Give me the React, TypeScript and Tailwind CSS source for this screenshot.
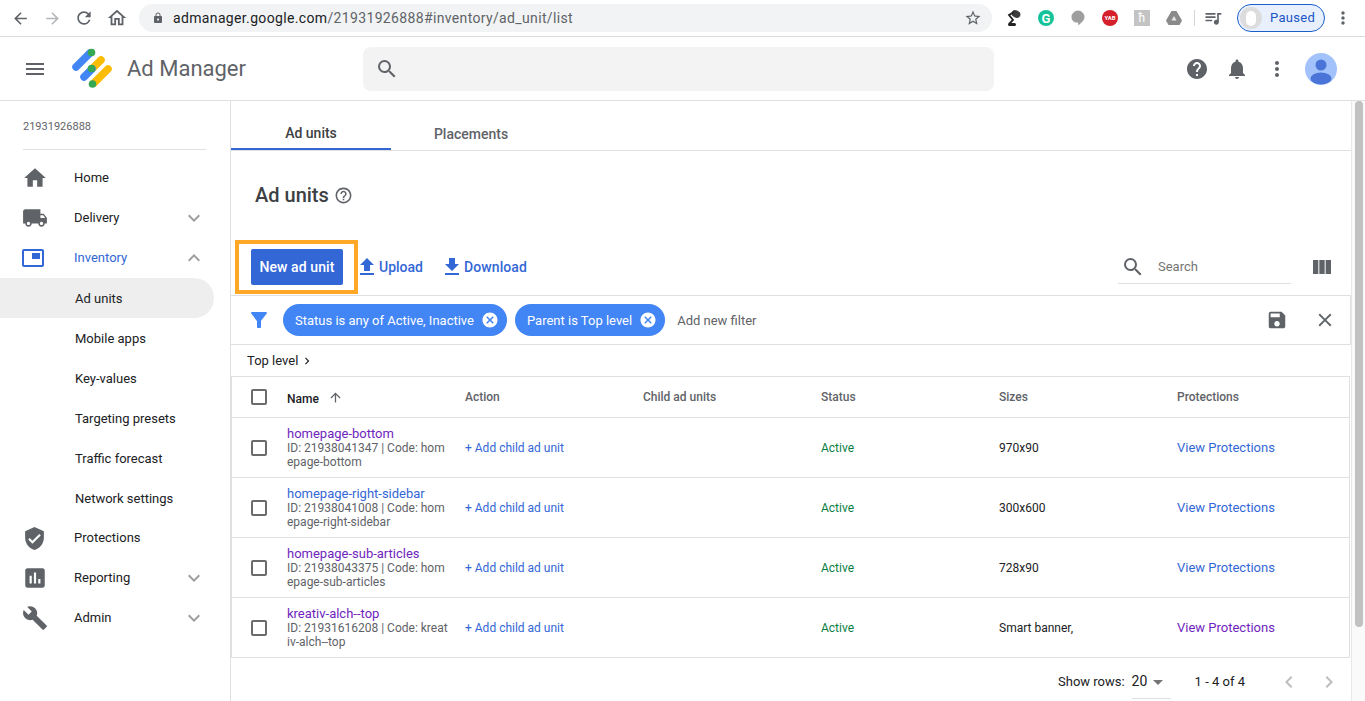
import type { ReactNode } from 'react';
import {
  MdArrowBack, MdArrowForward, MdRefresh, MdOutlineHome, MdLock, MdStarBorder, MdQueueMusic, MdMoreVert,
  MdMenu, MdSearch, MdHelp, MdNotifications, MdHome, MdLocalShipping, MdVerifiedUser, MdAssessment,
  MdBuild, MdExpandMore, MdExpandLess, MdHelpOutline, MdFileUpload, MdFileDownload, MdViewColumn, MdFilterAlt,
  MdCancel, MdSave, MdClose, MdChevronRight, MdChevronLeft, MdArrowUpward, MdArrowDropDown,
} from 'react-icons/md';

const Logo = () => (
  <svg width="42" height="42" viewBox="0 0 42 42" fill="none" strokeLinecap="round" strokeWidth="7.5">
    <path d="M5 19 L19 5" stroke="#4285f4" />
    <path d="M22 20 L30 12" stroke="#fbbc04" />
    <path d="M13 29 L21 21" stroke="#4285f4" />
    <path d="M23 35 L37 21" stroke="#fbbc04" />
    <circle cx="20.5" cy="4.5" r="3.8" fill="#34a853" />
    <circle cx="20.5" cy="20.5" r="3.8" fill="#34a853" />
    <circle cx="21.5" cy="36" r="3.8" fill="#34a853" />
  </svg>
);

const ExtensionIcons = () => (
  <div className="flex items-center">
    <div className="w-[32px] flex justify-center">
      <svg width="16" height="18" viewBox="0 0 16 18">
        <ellipse cx="10" cy="5" rx="4.5" ry="3.6" fill="#3c3c3c" transform="rotate(25 10 5)" />
        <path d="M8 3 L3 6 L7 11 L3 15" stroke="#222" strokeWidth="1.8" fill="none" />
        <rect x="2" y="14" width="8" height="3" rx="1.5" fill="#222" />
      </svg>
    </div>
    <div className="w-[32px] flex justify-center">
      <div className="w-4 h-4 rounded-full bg-[#15c39a] flex items-center justify-center text-white text-[13px] leading-none font-bold">G</div>
    </div>
    <div className="w-[32px] flex justify-center">
      <svg width="14" height="16" viewBox="0 0 14 16">
        <path d="M7 0.5 A6.5 6.5 0 0 1 13.5 7 C13.5 10.5 10 12.5 7.5 15.5 L7 12.5 C3.5 13 0.5 10.500 0.500 7 A6.500 6.500 0 0 1 7 0.500 Z" fill="#9e9e9e" />
      </svg>
    </div>
    <div className="w-[32px] flex justify-center">
      <div className="w-4 h-4 rounded-full bg-[#d3202a] flex items-center justify-center text-white text-[6px] leading-none font-bold">YAB</div>
    </div>
    <div className="w-[32px] flex justify-center">
      <div className="w-4 h-4 bg-[#c4c4c4] flex items-center justify-center text-white text-[12px] leading-none">ћ</div>
    </div>
    <div className="w-[32px] flex justify-center">
      <svg width="16" height="14" viewBox="0 0 16 14">
        <path d="M5.500 0 H10.500 L16 9.500 L13.500 14 H2.500 L0 9.500 Z" fill="#8a8a8a" />
        <path d="M8 5 L10.500 9.500 H5.500 Z" fill="#e8e8e8" />
      </svg>
    </div>
  </div>
);

const BrowserBar = () => (
  <div className="h-[37px] flex items-center border-b border-[#dadce0] bg-white">
    <div className="flex items-center text-[#5f6368] pl-[11px] w-[139px]">
      <MdArrowBack size={19} />
      <MdArrowForward size={19} className="ml-[13px] text-[#b4b6b9]" />
      <MdRefresh size={20} className="ml-[12px]" />
      <MdOutlineHome size={22} className="ml-[12px]" />
    </div>
    <div className="w-[853px] h-[28px] rounded-full bg-[#f1f3f4] flex items-center pl-[13px] pr-[10px]">
      <MdLock size={12} className="text-[#5f6368]" />
      <span className="ml-[9px] text-[14px] tracking-[0.35px] text-[#202124]">
        admanager.google.com<span className="text-[#5f6368]">/21931926888#inventory/ad_unit/list</span>
      </span>
      <MdStarBorder size={18} className="ml-auto text-[#5f6368]" />
    </div>
    <div className="ml-[6px]"><ExtensionIcons /></div>
    <div className="w-px h-[16px] bg-[#d5d5d5] ml-[4px]" />
    <MdQueueMusic size={20} className="ml-[8px] text-[#5f6368]" />
    <div className="ml-[14px] w-[88px] h-[28px] rounded-full border border-[#1a5fc9] bg-[#e8f0fe] flex items-center">
      <div className="w-[22px] h-[22px] ml-[2px] rounded-full bg-[#dcdcdc] flex items-center justify-center">
        <div className="w-[10px] h-[15px] rounded-full bg-white" />
      </div>
      <span className="ml-[8px] text-[13px] text-[#1a56c4] tracking-[0.3px]">Paused</span>
    </div>
    <MdMoreVert size={20} className="ml-[8px] text-[#5f6368]" />
  </div>
);

const Avatar = () => (
  <svg width="32" height="32" viewBox="0 0 32 32" className="ml-[16px]">
    <defs>
      <clipPath id="avatar-clip"><circle cx="16" cy="16" r="16" /></clipPath>
    </defs>
    <g clipPath="url(#avatar-clip)">
      <rect width="32" height="32" fill="#a1c2fa" />
      <circle cx="16" cy="12" r="5.500" fill="#4a74d8" />
      <ellipse cx="16" cy="25.500" rx="10.500" ry="6" fill="#4a74d8" />
    </g>
  </svg>
);

const AppHeader = () => (
  <div className="h-[64px] flex items-center border-b border-[#e0e0e0] bg-white">
    <MdMenu size={24} className="ml-[23px] text-[#5f6368]" />
    <div className="ml-[24px]"><Logo /></div>
    <span className="ml-[14px] text-[22px] text-[#5f6368] leading-none">Ad Manager</span>
    <div className="ml-[117px] w-[631px] h-[44px] rounded-lg bg-[#f3f3f3] flex items-center pl-[12px]">
      <MdSearch size={24} className="text-[#5f6368]" />
    </div>
    <div className="ml-auto flex items-center text-[#5f6368] pr-[28px]">
      <MdHelp size={24} />
      <MdNotifications size={24} className="ml-[16px]" />
      <MdMoreVert size={24} className="ml-[16px]" />
      <Avatar />
    </div>
  </div>
);

type NavItem = { label: string; icon?: ReactNode; chevron?: 'up' | 'down'; active?: boolean; selected?: boolean };

const InventoryIcon = () => (
  <div className="w-[22px] h-[18px] rounded-[2px] border-2 border-[#3367d6] flex justify-end pt-[2px] pr-[2px]">
    <div className="w-[8px] h-[6px] bg-[#3367d6]" />
  </div>
);

const navItems: NavItem[] = [
  { label: 'Home', icon: <MdHome size={26} /> },
  { label: 'Delivery', icon: <MdLocalShipping size={26} />, chevron: 'down' },
  { label: 'Inventory', icon: <InventoryIcon />, chevron: 'up', active: true },
  { label: 'Ad units', selected: true },
  { label: 'Mobile apps' },
  { label: 'Key-values' },
  { label: 'Targeting presets' },
  { label: 'Traffic forecast' },
  { label: 'Network settings' },
  { label: 'Protections', icon: <MdVerifiedUser size={25} /> },
  { label: 'Reporting', icon: <MdAssessment size={26} />, chevron: 'down' },
  { label: 'Admin', icon: <MdBuild size={26} />, chevron: 'down' },
];

const Sidebar = () => (
  <div className="w-[231px] shrink-0 border-r border-[#e0e0e0] bg-white">
    <div className="mx-[23px] mr-[24px] h-[49px] pt-[18px] border-b border-[#e0e0e0] text-[11px] leading-[16px] text-[#5f6368]">21931926888</div>
    <div className="pt-[8px]">
      {navItems.map((item) => (
        <div
          key={item.label}
          className={`h-[40px] w-[214px] flex items-center rounded-r-full text-[13px] ${item.selected ? 'bg-[#eeeeee]' : ''} ${item.active ? 'text-[#3367d6]' : 'text-[#202124]'}`}
        >
          {item.icon ? (
            <>
              <div className="w-[70px] pl-[22px] flex items-center text-[#5f6368]">{item.icon}</div>
              <span className="ml-[4px] -mt-[1px]">{item.label}</span>
            </>
          ) : (
            <span className="ml-[75px] mt-[1px]">{item.label}</span>
          )}
          {item.chevron === 'down' && <MdExpandMore size={24} className="ml-auto mr-[8px] text-[#9e9e9e]" />}
          {item.chevron === 'up' && <MdExpandLess size={24} className="ml-auto mr-[8px] text-[#9e9e9e]" />}
        </div>
      ))}
    </div>
  </div>
);

const Checkbox = () => <div className="w-4 h-4 rounded-[2px] border-2 border-[#6b6b6b]" />;

const FilterChip = ({ label }: { label: string }) => (
  <div className="h-[32px] rounded-full bg-[#4285f4] text-white text-[13px] flex items-center pl-[12px] pr-[8px]">
    <span className="mt-[2px]">{label}</span>
    <MdCancel size={18} className="ml-[7px]" />
  </div>
);

type Row = { name: string; nameVisited: boolean; meta: string; size: string; protectVisited?: boolean };

const rows: Row[] = [
  { name: 'homepage-bottom', nameVisited: true, meta: 'ID: 21938041347 | Code: homepage-bottom', size: '970x90' },
  { name: 'homepage-right-sidebar', nameVisited: false, meta: 'ID: 21938041008 | Code: homepage-right-sidebar', size: '300x600' },
  { name: 'homepage-sub-articles', nameVisited: true, meta: 'ID: 21938043375 | Code: homepage-sub-articles', size: '728x90' },
  { name: 'kreativ-alch--top', nameVisited: true, meta: 'ID: 21931616208 | Code: kreativ-alch--top', size: 'Smart banner,', protectVisited: true },
];

const AdTable = () => (
  <div className="border-y border-l border-r mr-[1px] border-[#e0e0e0]">
    <div className="h-[40px] grid grid-cols-[55px_178px_178px_178px_178px_178px_1fr] items-center text-[12px] font-medium text-[#5f6368]">
      <div className="pl-[19px]"><Checkbox /></div>
      <div className="flex items-center text-[#202124] pt-[4px]">
        Name
        <MdArrowUpward size={15} className="ml-[9px] -mt-[3px] text-[#5f6368]" />
      </div>
      <div>Action</div>
      <div>Child ad units</div>
      <div>Status</div>
      <div>Sizes</div>
      <div>Protections</div>
    </div>
    {rows.map((row) => (
      <div key={row.name} className="h-[60px] border-t border-[#e0e0e0] grid grid-cols-[55px_178px_178px_178px_178px_178px_1fr] items-center text-[12px] text-[#202124]">
        <div className="pl-[19px]"><Checkbox /></div>
        <div className="pr-[15px]">
          <div className={`text-[13px] leading-[14px] ${row.nameVisited ? 'text-[#6f25bd]' : 'text-[#3367d6]'}`}>{row.name}</div>
          <div className="leading-[14px] text-[#5f6368] break-all">{row.meta}</div>
        </div>
        <div className="text-[#3367d6]">+ Add child ad unit</div>
        <div />
        <div className="text-[#0b8043]">Active</div>
        <div>{row.size}</div>
        <div className={`text-[13px] ${row.protectVisited ? 'text-[#6f25bd]' : 'text-[#3367d6]'}`}>View Protections</div>
      </div>
    ))}
  </div>
);

const MainPanel = () => (
  <div className="flex-1 min-w-0 bg-white">
    <div className="h-[50px] flex border-b border-[#e0e0e0] text-[14px] font-medium">
      <div className="w-[160px] h-[49px] flex items-center justify-center border-b-2 border-[#3367d6] text-[#3c4043] pt-[17px]">Ad units</div>
      <div className="w-[160px] flex items-center justify-center text-[#5f6368] pt-[17px]">Placements</div>
    </div>
    <div className="h-[88px] flex items-start pl-[24px] pt-[31px]">
      <span className="text-[20px] font-medium text-[#3c4043] leading-[26px]">Ad units</span>
      <MdHelpOutline size={19} className="ml-[5px] mt-[4px] text-[#5f6368]" />
    </div>
    <div className="h-[57px] flex items-center border-b border-[#e0e0e0]">
      <div className="ml-[4px] w-[123px] h-[54px] border-[4px] border-[#ffa726] flex items-center pl-[12px]">
        <div className="w-[92px] h-[36px] rounded-[2px] bg-[#3367d6] text-white text-[14px] tracking-[0.1px] font-medium flex items-center justify-center">New ad unit</div>
      </div>
      <div className="-ml-[3px] flex items-center text-[#3367d6] text-[14px] font-medium">
        <MdFileUpload size={24} />
        <span>Upload</span>
        <MdFileDownload size={24} className="ml-[17px]" />
        <span className="tracking-[0.1px]">Download</span>
      </div>
      <div className="ml-auto flex items-center w-[173px] h-[33px] border-b border-[#e0e0e0] text-[13px] text-[#757575]">
        <MdSearch size={24} className="ml-[3px] text-[#5f6368]" />
        <span className="ml-[13px]">Search</span>
      </div>
      <MdViewColumn size={24} className="ml-[19px] mr-[17px] text-[#5f6368]" />
    </div>
    <div className="h-[49px] flex items-center border-b border-r border-[#e0e0e0]">
      <MdFilterAlt size={24} className="ml-[16px] text-[#4285f4]" />
      <div className="ml-[12px] flex gap-[8px]">
        <FilterChip label="Status is any of Active, Inactive" />
        <FilterChip label="Parent is Top level" />
      </div>
      <span className="ml-[12px] mt-[2px] text-[13px] text-[#5f6368]">Add new filter</span>
      <MdSave size={22} className="ml-auto text-[#5f6368]" />
      <MdClose size={22} className="ml-[26px] mr-[14px] text-[#5f6368]" />
    </div>
    <div className="h-[31px] flex items-center pl-[16px] text-[13px] text-[#202124]">
      Top level
      <MdChevronRight size={14} className="ml-[2px]" />
    </div>
    <AdTable />
    <div className="h-[44px] flex items-center pt-[4px] text-[13px] text-[#202124]">
      <span className="ml-[827px]">Show rows:</span>
      <div className="ml-[7px] w-[39px] h-[34px] flex items-center border-b border-[#e0e0e0] text-[14px]">
        20
        <MdArrowDropDown size={24} className="-ml-[1px] text-[#757575]" />
      </div>
      <span className="ml-[24px]">1 - 4 of 4</span>
      <MdChevronLeft size={24} className="ml-[32px] text-[#bdbdbd]" />
      <MdChevronRight size={24} className="ml-[16px] text-[#bdbdbd]" />
    </div>
  </div>
);

const Scrollbar = () => (
  <div className="w-[14px] shrink-0 border-l border-[#e8e8e8] bg-[#fafafa] pl-[3px] pr-[2px]">
    <div className="h-[526px] rounded-full bg-[#c1c1c1]" />
  </div>
);

export default function App() {
  return (
    <div className="relative h-[701px] overflow-hidden bg-white font-['Roboto',sans-serif]">
      <BrowserBar />
      <AppHeader />
      <div className="flex h-[600px]">
        <Sidebar />
        <MainPanel />
        <Scrollbar />
      </div>
    </div>
  );
}
